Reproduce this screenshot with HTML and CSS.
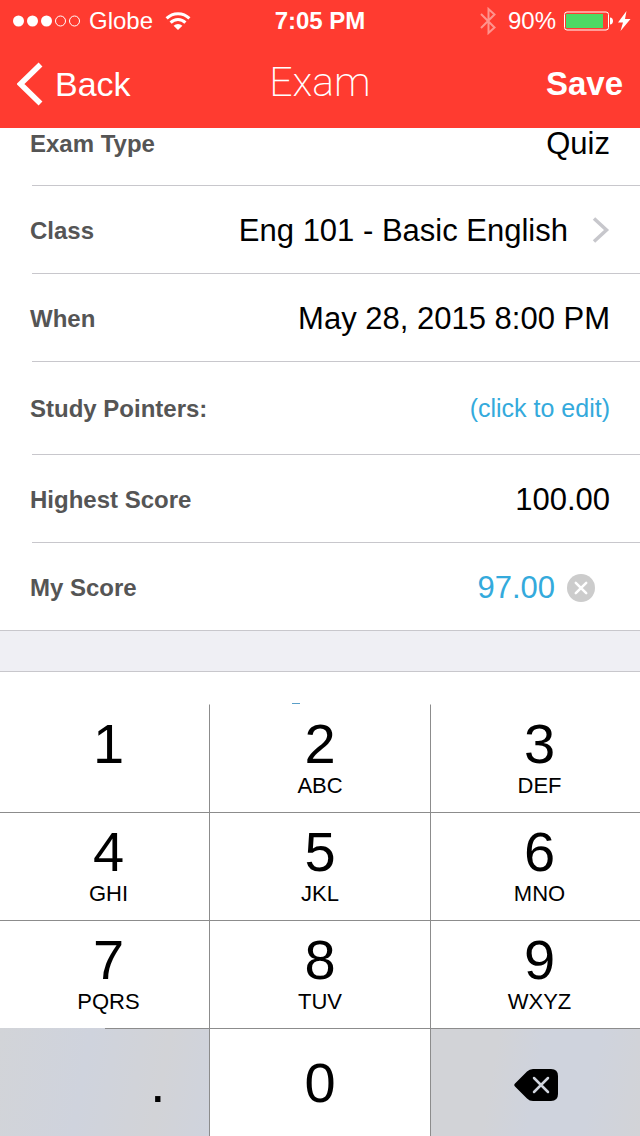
FILE: index.html
```html
<!DOCTYPE html>
<html lang="en">
<head>
<meta charset="utf-8">
<meta name="viewport" content="width=device-width, initial-scale=1">
<title>Exam</title>
<link rel="stylesheet" href="styles.css">
</head>
<body>
<header class="top">
  <div class="status">
    <div class="status-left">
      <svg width="68" height="12" viewBox="0 0 68 12" aria-hidden="true">
        <g fill="#fff"><circle cx="5.5" cy="6" r="5.5"/><circle cx="19.5" cy="6" r="5.5"/><circle cx="33.5" cy="6" r="5.5"/></g>
        <g fill="none" stroke="#fff"><circle cx="47.5" cy="6" r="5"/><circle cx="61.5" cy="6" r="5"/></g>
      </svg>
      <span>Globe</span>
      <svg class="wifi" width="26" height="18" viewBox="0 0 26 18" aria-hidden="true">
        <g fill="none" stroke="#fff" stroke-width="3"><path d="M1.6 6.4a16.2 16.2 0 0 1 22.8 0"/><path d="M5.6 10.6a10.4 10.4 0 0 1 14.8 0"/></g>
        <path fill="#fff" d="M8.6 13.8a6.2 6.2 0 0 1 8.8 0L13 18z"/>
      </svg>
    </div>
    <strong>7:05 PM</strong>
    <div class="status-right">
      <svg width="16" height="28" viewBox="0 0 16 28" aria-hidden="true"><path d="M1 7l13.500 13.500L8.500 26V2l6 5.500L1 21" fill="none" stroke="#fff" stroke-width="2" opacity=".45"/></svg>
      <span class="percent">90%</span>
      <svg width="68" height="20" viewBox="0 0 68 20" aria-hidden="true">
        <rect x=".5" y="1" width="44" height="18" rx="2.500" fill="none" stroke="#fff"/>
        <rect x="2" y="3" width="37" height="14" fill="#4cd964"/>
        <path d="M46 6.500c4 0 4 7 0 7z" fill="#fff"/>
        <path d="M62.500 0L54 11.500h5L56.500 20 66.500 8h-5.500z" fill="#fff"/>
      </svg>
    </div>
  </div>
  <nav class="nav">
    <button class="back" type="button">
      <svg width="26" height="44" viewBox="0 0 26 44" aria-hidden="true"><path d="M23.500 2.500L3.500 22l20 19.500" fill="none" stroke="#fff" stroke-width="5.500"/></svg>
      Back
    </button>
    <h1>Exam</h1>
    <button class="save" type="button">Save</button>
  </nav>
</header>
<main class="form">
  <div class="row row-first"><label for="type">Exam Type</label><input id="type" value="Quiz"></div>
  <div class="row"><label for="class">Class</label>
    <button id="class" class="value picker" type="button">Eng 101 - Basic English
      <svg width="18" height="28" viewBox="0 0 18 28" aria-hidden="true"><path d="M2 1.500L14.500 13 2 24.500" fill="none" stroke="#c7c7cc" stroke-width="3.500"/></svg>
    </button></div>
  <div class="row"><label for="when">When</label><input id="when" value="May 28, 2015 8:00 PM"></div>
  <div class="row row-tall"><label for="pointers">Study Pointers:</label><button id="pointers" class="edit" type="button">(click to edit)</button></div>
  <div class="row"><label for="highest">Highest Score</label><input id="highest" inputmode="decimal" value="100.00"></div>
  <div class="row row-last"><label for="mine">My Score</label><input id="mine" class="active" inputmode="decimal" value="97.00">
    <button class="clear" type="button" aria-label="Clear score"><svg width="28" height="28" viewBox="0 0 28 28" aria-hidden="true"><circle cx="14" cy="14" r="14" fill="#ccc"/><path d="M8.800 8.800l10.400 10.400M19.200 8.800L8.800 19.200" stroke="#fff" stroke-width="2.500" stroke-linecap="round"/></svg></button></div>
  <div class="gap"></div>
  <div class="peek"><span class="sliver"></span></div>
</main>
<section class="keypad" aria-label="Number pad">
  <button type="button" class="key">1<small></small></button>
  <button type="button" class="key">2<small>ABC</small></button>
  <button type="button" class="key">3<small>DEF</small></button>
  <button type="button" class="key">4<small>GHI</small></button>
  <button type="button" class="key">5<small>JKL</small></button>
  <button type="button" class="key">6<small>MNO</small></button>
  <button type="button" class="key">7<small>PQRS</small></button>
  <button type="button" class="key">8<small>TUV</small></button>
  <button type="button" class="key">9<small>WXYZ</small></button>
  <div class="split"><button type="button" class="point">.</button></div>
  <button type="button" class="key zero">0</button>
  <button type="button" class="key delete" aria-label="Delete">
    <svg width="44" height="32" viewBox="0 0 44 32" aria-hidden="true"><path d="M1 14.500L13 2.600Q15.500 0 19 0h18q7 0 7 7v18q0 7-7 7H19q-3.500 0-6-2.600L1 17.500q-1.500-1.500 0-3z"/><path d="M20 9l14 14M34 9L20 23" stroke="#d0d4dd" stroke-width="2.500" stroke-linecap="round"/></svg>
  </button>
</section>
</body>
</html>
```
FILE: styles.css
```css
* { box-sizing: border-box; }
body {
  margin: 0;
  min-height: 100vh;
  display: flex;
  flex-direction: column;
  background: #fff;
  color: #000;
  font-family: "Liberation Sans", Arial, sans-serif;
}
button, input {
  font: inherit;
  color: inherit;
  background: none;
  border: 0;
  border-radius: 0;
  padding: 0;
  margin: 0;
}
svg { display: block; flex: none; }

.top { background: #ff3b30; color: #fff; }
.status {
  display: grid;
  grid-template-columns: 1fr auto 1fr;
  align-items: center;
  height: 40px;
  padding: 1px 8px 0;
  font-size: 24px;
}
.status-left, .status-right { display: flex; align-items: center; gap: 8px; }
.status-left { padding-left: 5px; }
.status-left .wifi { margin-left: 4px; }
.status-right { justify-content: flex-end; }
.status-right .percent { margin-left: 4px; }
.nav {
  display: grid;
  grid-template-columns: 1fr auto 1fr;
  align-items: center;
  height: 88px;
  padding: 0 17px;
  font-size: 34px;
}
.back { display: flex; align-items: center; gap: 12px; justify-self: start; }
.save { justify-self: end; font-size: 33px; font-weight: bold; }
.nav h1 {
  margin: 0;
  padding-bottom: 4px;
  font-family: Roboto, sans-serif;
  font-size: 41px;
  font-weight: 200;
}

.row {
  display: flex;
  align-items: center;
  gap: 12px;
  height: 88px;
  padding: 2px 30px 0;
  background: linear-gradient(#c8c7cc, #c8c7cc) 32px 100% / 100% 1px no-repeat;
  font-size: 31px;
}
.row-first { height: 58px; padding-bottom: 28px; }
.row-tall { height: 93px; padding-top: 0; }
.row-last { padding-right: 45px; background-position: 0 100%; }
.row label { color: #555; font-size: 24px; font-weight: bold; }
.row input { flex: 1; width: 0; text-align: right; }
.value { display: flex; align-items: center; gap: 24px; }
.picker, .edit { margin-left: auto; }
.edit { color: #34aadc; font-size: 25px; }
.row .active { color: #34aadc; }
.gap { height: 41px; background: #efeff4; border-bottom: 1px solid #c8c7cc; }
.peek { display: flex; align-items: flex-end; height: 32px; padding-left: 292px; }
.sliver { width: 8px; height: 1px; background: #5a9fc8; }

.keypad {
  flex: 1;
  display: grid;
  grid-template-columns: 21fr 22fr 21fr;
  grid-auto-rows: minmax(108px, 1fr);
}
.key {
  display: flex;
  flex-direction: column;
  align-items: center;
  justify-content: center;
  border-top: 1px solid #8c8c8c;
  font-size: 56px;
  line-height: 54px;
}
.key small { height: 30px; font-size: 22px; line-height: 30px; }
.key:nth-child(-n+3) { border-top-color: transparent; }
.key:nth-child(3n+1) { padding-left: 8px; }
.key:nth-child(3n) { padding-left: 8px; border-left: 1px solid #8c8c8c; }
.key:nth-child(3n+1), .split { border-right: 1px solid #8c8c8c; }
.split {
  display: grid;
  grid-template-columns: 1fr 1fr;
  background: linear-gradient(100deg, #d2d4d8, #cfd3dd 40%, #d2d3d7 75%, #cfd3dd);
}
.point { grid-column: 2; border-top: 1px solid #8c8c8c; padding-left: 2px; font-size: 56px; }
.keypad .delete {
  padding: 4px 0 0;
  background: linear-gradient(100deg, #d2d3d7 30%, #cfd3dd 50%, #cfd3dd 75%, #d2d3d7);
}
```
